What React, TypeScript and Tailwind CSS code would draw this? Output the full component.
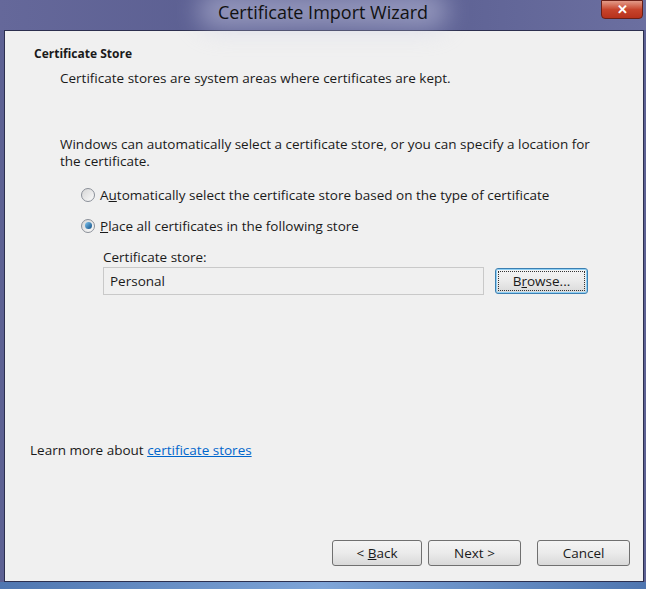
import { useState } from 'react'

const font = { fontFamily: '"Open Sans", "Noto Sans", sans-serif' }

function Radio({ checked }: { checked: boolean }) {
  return (
    <span className="relative inline-flex h-[14px] w-[14px] items-center justify-center rounded-full border border-[#8a8f98] bg-gradient-to-br from-[#d6d6d6] to-[#fbfbfb]">
      {checked && (
        <span className="h-[7px] w-[7px] rounded-full bg-gradient-to-br from-[#7fc6f0] to-[#0c4f86]" />
      )}
    </span>
  )
}

function WinButton({ children, focused }: { children: React.ReactNode; focused?: boolean }) {
  return (
    <button
      className={`flex h-[26px] w-full items-center justify-center rounded-[3px] border bg-gradient-to-b from-[#f4f4f4] via-[#ebebeb] to-[#d9d9d9] text-[13.5px] text-[#1a1a1a] ${
        focused ? 'border-[#3c7fb1] p-[2px] shadow-[inset_0_0_0_1px_#8fd0f5]' : 'border-[#707070]'
      }`}
    >
      {focused ? (
        <span className="flex h-full w-full items-center justify-center border border-dotted border-[#333]">
          <span>{children}</span>
        </span>
      ) : (
        <span>{children}</span>
      )}
    </button>
  )
}

export default function App() {
  const [choice, setChoice] = useState<'auto' | 'place'>('place')

  return (
    <div className="flex h-[589px] w-[646px] flex-col overflow-hidden bg-[#5d6193]" style={font}>
      {/* title bar */}
      <div className="relative flex h-[30px] items-center justify-center bg-gradient-to-r from-[#65689a] via-[#575b8e] to-[#6b6fa0]">
        <div className="absolute left-1/2 top-[-8px] h-[38px] w-[250px] -translate-x-1/2 rounded-full bg-[#c9cbe4] opacity-50 blur-md" />
        <span className="relative -mt-[5px] text-[18px] text-[#111]">Certificate Import Wizard</span>
        <div className="absolute right-[3px] top-0 flex h-[19px] w-[42px] items-center justify-center rounded-b-[4px] border border-[#6b1f17] bg-gradient-to-b from-[#e29a88] via-[#c7442c] to-[#b7311c] text-[13px] font-bold text-white">
          ✕
        </div>
      </div>

      {/* body */}
      <div className="flex flex-1 pl-[4px] pr-[2px]">
        <div className="flex flex-1 flex-col border border-[#2c2f4f] bg-[#f0f0f0] text-[13.5px] text-[#1a1a1a]">
          <div className="pl-[29px] pt-[14px]">
            <div className="text-[12px] font-bold">Certificate Store</div>
            <div className="mt-[5px] pl-[26px]">Certificate stores are system areas where certificates are kept.</div>
          </div>

          <div className="pl-[55px] pr-[50px] pt-[48px] leading-[17px]">
            Windows can automatically select a certificate store, or you can specify a location for the certificate.
          </div>

          <div className="flex flex-col gap-[12px] pl-[76px] pt-[15px]">
            <label className="flex items-center gap-[5px]" onClick={() => setChoice('auto')}>
              <Radio checked={choice === 'auto'} />
              <span>
                A<span className="underline">u</span>tomatically select the certificate store based on the type of certificate
              </span>
            </label>
            <label className="-mt-[2px] flex items-center gap-[5px]" onClick={() => setChoice('place')}>
              <Radio checked={choice === 'place'} />
              <span>
                <span className="underline">P</span>lace all certificates in the following store
              </span>
            </label>
          </div>

          <div className="pl-[98px] pt-[11px]">
            <div>Certificate store:</div>
            <div className="flex items-center gap-[11px]">
              <div className="flex h-[28px] w-[381px] items-center border border-[#c9c9c9] bg-[#f0f0f0] pl-[6px]">
                Personal
              </div>
              <div className="w-[93px]">
                <WinButton focused>
                  B<span className="underline">r</span>owse...
                </WinButton>
              </div>
            </div>
          </div>

          <div className="flex-1" />

          <div className="pl-[25px]">
            Learn more about <a className="text-[#0066cc] underline">certificate stores</a>
          </div>

          <div className="flex justify-end gap-[6px] pb-[15px] pr-[13px] pt-[80px]">
            <div className="w-[90px]">
              <WinButton>
                &lt; <span className="underline">B</span>ack
              </WinButton>
            </div>
            <div className="w-[93px]">
              <WinButton>Next &gt;</WinButton>
            </div>
            <div className="ml-[10px] w-[93px]">
              <WinButton>Cancel</WinButton>
            </div>
          </div>
        </div>
      </div>
      <div className="h-[7px] bg-gradient-to-r from-[#4f76b0] via-[#7fa5d8] to-[#4f76b0]" />
    </div>
  )
}
